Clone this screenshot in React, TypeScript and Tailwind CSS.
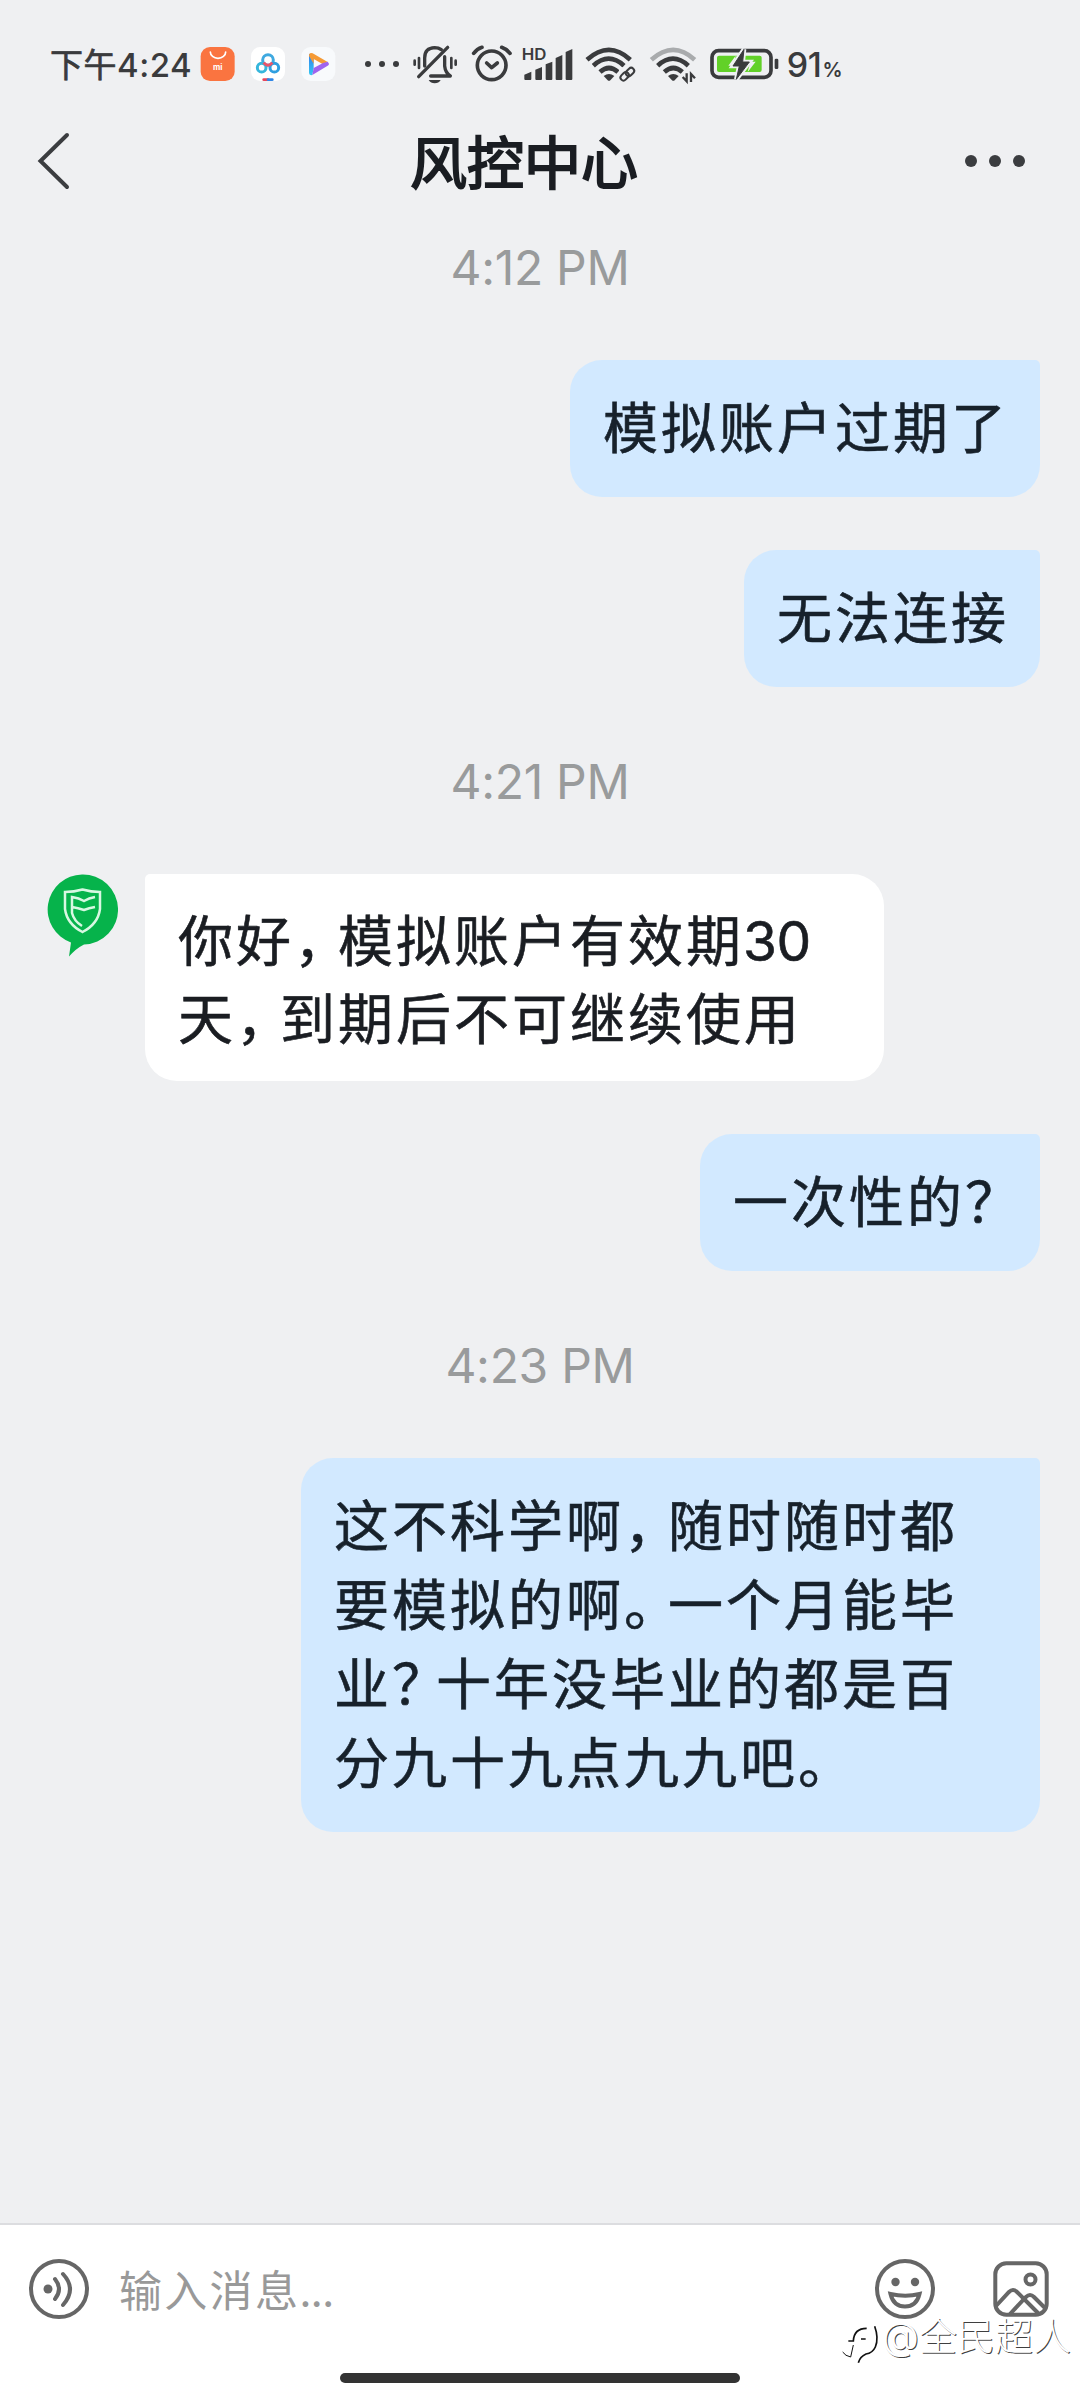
import type { ReactNode } from "react"

const BUBBLE_TEXT =
  "text-[55px] tracking-[3px] whitespace-nowrap [-webkit-text-stroke:0.6px_currentColor]"

/** Half-width punctuation with some air behind it, 44px in all */
function P({ children }: { children: ReactNode }) {
  return <span className="mr-[13.5px] [font-feature-settings:'halt']">{children}</span>
}

function TimeLabel({ children, className }: { children: string; className?: string }) {
  return (
    <div
      className={`h-[60px] text-center text-[48px] leading-[60px] tracking-[-0.300px] text-[#999b9c] ${className ?? ""}`}
    >
      {children}
    </div>
  )
}

function Sent({ lines, className }: { lines: ReactNode[]; className?: string }) {
  return (
    <div
      className={`self-end rounded-[32px] rounded-tr-[5px] bg-[#d2e9ff] pt-[29px] pb-[29px] pl-[33px] text-[#17212b] ${BUBBLE_TEXT} ${className ?? ""}`}
    >
      {lines.map((line, i) => (
        <div key={i} className="h-[79px] leading-[79px]">
          {line}
        </div>
      ))}
    </div>
  )
}

function StatusBar() {
  return (
    <div className="flex h-[70px] shrink-0 pl-[50px] text-[#3a3b3d]">
      <div className="flex w-[150px] items-center pt-[2px] whitespace-nowrap text-[33px] font-medium tracking-[0.5px]">
        <span className="font-normal [-webkit-text-stroke:0.7px_currentColor]">下午</span>4:24
      </div>

      {/* app notifications */}
      <svg viewBox="510 0 150 210" className="h-[70px] w-[50px]">
        <rect x="512" y="51" width="102" height="102" rx="28" fill="#fa7440" />
        <path d="M541 66a23 19 0 0 0 46 0" fill="none" stroke="#fff" strokeWidth="5" strokeLinecap="round" />
        <text x="563" y="120" textAnchor="middle" fontSize="24" fontWeight="700" fill="#fff">mi</text>
      </svg>
      <svg viewBox="660 0 150 210" className="h-[70px] w-[50px]">
        <rect x="663" y="51" width="102" height="102" rx="28" fill="#fff" />
        <g fill="none" strokeWidth="9">
          <circle cx="714" cy="90" r="16" stroke="#3fa9e0" />
          <circle cx="695" cy="113" r="13" stroke="#35b6dc" />
          <circle cx="733" cy="113" r="13" stroke="#2f9fe0" />
          <path d="M701 98q13 16 26 0" stroke="#e8566a" />
        </g>
        <path d="M701 149h13" stroke="#e8465a" strokeWidth="8" strokeLinecap="round" />
        <path d="M714 149h13" stroke="#2f86e6" strokeWidth="8" strokeLinecap="round" />
      </svg>
      <svg viewBox="810 0 300 210" className="h-[70px] w-[100px]">
        <defs>
          <linearGradient id="playLeft" x1="0" y1="0" x2="0" y2="1">
            <stop offset="0" stopColor="#2f7df0" />
            <stop offset="1" stopColor="#35c8f0" />
          </linearGradient>
        </defs>
        <rect x="814" y="51" width="102" height="102" rx="28" fill="#f8fafc" />
        <path d="M837 71l14 12v32l-4 20q-10 2-10-6z" fill="url(#playLeft)" />
        <path d="M837 78q0-12 11-8l45 26-14 7-28-16v14z" fill="#f59a35" />
        <path d="M897 101q0 4-4 6l-46 28 4-21 28-15 14-4z" fill="#a064ee" />
        <g fill="currentColor">
          <circle cx="1014" cy="102" r="9" />
          <circle cx="1056" cy="102" r="9" />
          <circle cx="1098" cy="102" r="9" />
        </g>
      </svg>

      {/* muted bell */}
      <svg viewBox="0 0 200 210" className="h-[70px] w-[66.67px]" fill="none" stroke="currentColor" strokeWidth="10" strokeLinecap="round">
        <path d="M74 108V84q0-30 30-31 12 0 20 6M134 80v28q2 20 17 30H92" strokeLinejoin="round" />
        <path d="M56 140l87-88" />
        <path d="M44 92v12M57 84v30M154 84v30M167 92v12" strokeWidth="8" />
        <path d="M86 150h36q-6 10-18 10t-18-10z" fill="currentColor" stroke="none" />
      </svg>
      {/* alarm */}
      <svg viewBox="200 0 150 210" className="h-[70px] w-[50px]" fill="none" stroke="currentColor" strokeWidth="11" strokeLinecap="round">
        <circle cx="274" cy="106" r="43" />
        <path d="M259 99l15 14 17-14" strokeLinejoin="round" />
        <path d="M220 70q10-13 25-18M304 52q16 6 25 18" />
      </svg>
      {/* HD signal */}
      <svg viewBox="350 0 190 210" className="h-[70px] w-[63.33px]" fill="currentColor">
        <text x="364" y="90" fontSize="46" fontWeight="600" textLength="74" lengthAdjust="spacingAndGlyphs">HD</text>
        <path d="M372 134l21-9v22q0 3-3 3h-15q-3 0-3-3zM405 119l20-8v36q0 3-3 3h-14q-3 0-3-3zM436 103l20-8v52q0 3-3 3h-14q-3 0-3-3zM466 84l20-9v72q0 3-3 3h-14q-3 0-3-3zM496 66l20-9v90q0 3-3 3h-14q-3 0-3-3z" />
      </svg>
      {/* wifi with link */}
      <svg viewBox="540 0 200 210" className="h-[70px] w-[66.67px]" fill="none" stroke="currentColor" strokeWidth="14">
        <path d="M561 89q66-59 130 0" />
        <path d="M580 107q46-42 92 0" />
        <path d="M600 126q27-24 54 0" />
        <path d="M611 138q16-12 32 0l-12 13q-4 3-8 0z" fill="currentColor" stroke="none" />
        <rect x="657" y="112" width="50" height="46" fill="#eff0f2" stroke="none" />
        <g strokeWidth="6" strokeLinecap="round">
          <rect x="660" y="130" width="28" height="18" rx="9" transform="rotate(-45 674 139)" />
          <rect x="676" y="117" width="28" height="18" rx="9" transform="rotate(-45 690 126)" />
        </g>
      </svg>
      {/* wifi with traffic arrows */}
      <svg viewBox="740 0 185 210" className="h-[70px] w-[61.67px]" fill="none" stroke="currentColor" strokeWidth="14">
        <path d="M753 89q66-59 130 0" stroke="#a9abad" />
        <path d="M772 107q46-42 92 0" />
        <path d="M792 126q27-24 54 0" />
        <path d="M803 138q16-12 32 0l-12 13q-4 3-8 0z" fill="currentColor" stroke="none" />
        <path d="M859 130v24l-12-13M872 156v-24l12 13" strokeWidth="7" />
      </svg>
      {/* charging battery */}
      <svg viewBox="925 0 235 210" className="h-[70px] w-[78.33px]">
        <rect x="937" y="62" width="177" height="80" rx="20" fill="none" stroke="currentColor" strokeWidth="11" />
        <rect x="952" y="77" width="134" height="49" rx="6" fill="#62d128" />
        <rect x="1125" y="86" width="11" height="31" rx="4" fill="currentColor" />
        <path d="M1033 58l-33 50h19l-9 40 39-52h-20z" fill="#eff0f2" stroke="#eff0f2" strokeWidth="14" />
        <path d="M1008 77l-22 30h16zM1044 126l24-31h-16z" fill="#eff0f2" />
        <path d="M1033 58l-33 50h19l-9 40 39-52h-20z" fill="currentColor" stroke="currentColor" strokeWidth="3" />
      </svg>
      <div className="flex items-baseline text-[34px] leading-[70px] font-medium tracking-[-0.300px]">
        91<span className="ml-px text-[20px] font-semibold">%</span>
      </div>
    </div>
  )
}

function Header() {
  return (
    <div className="flex h-[122px] shrink-0 items-center justify-between pr-[55px] pl-[36px]">
      <svg viewBox="0 0 36 60" className="h-[60px] w-[36px]" fill="none" stroke="#3b3d40" strokeWidth="4" strokeLinecap="round">
        <path d="M31 4L4.500 30l26.500 26" />
      </svg>
      <h1 className="pt-[5px] pl-[11px] text-[57px] leading-[80px] font-normal text-[#1a1d22] [-webkit-text-stroke:2px_currentColor]">
        风控中心
      </h1>
      <div className="flex gap-3">
        <span className="size-[12px] rounded-full bg-[#3b3d40]" />
        <span className="size-[12px] rounded-full bg-[#3b3d40]" />
        <span className="size-[12px] rounded-full bg-[#3b3d40]" />
      </div>
    </div>
  )
}

function Avatar() {
  return (
    <svg viewBox="0 0 72 84" className="h-[84px] w-[72px] shrink-0">
      <path d="M36 .5a35 35 0 1 1 2 70q-8 4-15 12l2-14A35 35 0 0 1 36 .5z" fill="#06b34b" />
      <g fill="none" stroke="#d8f8e2" strokeWidth="2.500">
        <path d="M19 18q9 0 17.500-2.500Q45 18 54 18v17q-2 15-17.500 23Q21 50 19 35z" />
        <path d="M49 23q-6 1-11 4-5-3-12-4v16q2 8 10 13M26 33q6 1 12 3 5-2 11-3" />
      </g>
    </svg>
  )
}

function Composer() {
  return (
    <div className="relative flex h-[177px] shrink-0 flex-col border-t-2 border-[#dcdde0] bg-white">
      <div className="flex h-[128px] items-center pr-[30px] pl-[28px]">
        <svg viewBox="0 0 62 62" className="size-[62px]" fill="none" stroke="#666" strokeWidth="4" strokeLinecap="round">
          <circle cx="31" cy="31" r="28" />
          <circle cx="20" cy="31" r="4.500" fill="#666" stroke="none" />
          <path d="M27 21q8 10 0 20M35 16q14 15 0 31" />
        </svg>
        <div className="ml-[29px] flex-1 pt-[4px] text-[43px] tracking-[2.300px] text-[#999]">
          输入消息<span className="-ml-px tracking-[-1px]">...</span>
        </div>
        <svg viewBox="0 0 62 62" className="size-[62px]" fill="none" stroke="#666" strokeWidth="4">
          <circle cx="31" cy="31" r="28" />
          <circle cx="21.500" cy="24" r="4.200" fill="#666" stroke="none" />
          <circle cx="41" cy="24" r="4.200" fill="#666" stroke="none" />
          <path d="M16.500 36q15 3.500 29 0-3 12.500-14.500 12.500T16.500 36z" />
        </svg>
        <svg viewBox="0 0 58 58" className="ml-[56px] size-[58px]" fill="none" stroke="#666" strokeWidth="4">
          <rect x="3.300" y="3.300" width="51.400" height="51.400" rx="11" />
          <circle cx="38.500" cy="19.500" r="5" />
          <path d="M4 46l13-14q4-4 8 0l22 22" />
          <path d="M18 54l16-17q4-4 8 0l12 12" />
        </svg>
      </div>
      <div className="mx-auto mt-[20px] h-[10px] w-[400px] rounded-full bg-[#333]" />

      {/* source stamp over the bar */}
      <div className="absolute top-[81px] right-[9px] flex items-start text-white">
        <svg viewBox="30 40 120 126" className="mt-[17px] mr-[2px] h-[42px] w-[40px]" fill="none" stroke="#111" strokeWidth="5">
          <path d="M38 127q8 12 24 15l8-36" strokeWidth="3" />
          <path d="M55 94h15q2-38 40-38M93 88h14" />
          <path d="M134 50q13 36 2 62-8 18-28 21-18 8-23 26" />
        </svg>
        <span className="text-[38px] leading-[60px] font-light [text-shadow:1px_1px_0_rgba(0,0,0,0.75)]">
          @全民超人
        </span>
      </div>
    </div>
  )
}

export default function App() {
  return (
    <div className="flex h-[2400px] w-[1080px] flex-col overflow-hidden bg-[#eff0f2] pt-[30px] font-[Inter,'Noto_Sans_CJK_SC',sans-serif]">
      <StatusBar />
      <Header />

      <div className="flex flex-1 flex-col pr-[40px]">
        <TimeLabel className="mt-[16px] ml-[40px]">4:12 PM</TimeLabel>
        <Sent className="mt-[62px] w-[470px]" lines={["模拟账户过期了"]} />
        <Sent className="mt-[53px] w-[296px]" lines={["无法连接"]} />

        <TimeLabel className="mt-[65px] ml-[40px]">4:21 PM</TimeLabel>
        <div className="mt-[62px] flex pl-[46px]">
          <Avatar />
          <div
            className={`ml-[27px] h-[207px] w-[739px] rounded-[32px] rounded-tl-[5px] bg-white pt-[28px] pl-[33px] text-[#1a1d22] ${BUBBLE_TEXT}`}
          >
            <div className="leading-[78px]">
              你好<P>，</P>模拟账户有效期<span className="-ml-px tracking-[-0.500px]">30</span>
            </div>
            <div className="leading-[78px]">
              天<P>，</P>到期后不可继续使用
            </div>
          </div>
        </div>
        <Sent
          className="mt-[53px] w-[340px]"
          lines={[<>一次性的<P>？</P></>]}
        />

        <TimeLabel className="mt-[65px] ml-[40px]">4:23 PM</TimeLabel>
        <Sent
          className="mt-[62px] w-[739px]"
          lines={[
            <>这不科学啊<P>，</P>随时随时都</>,
            <>要模拟的啊<P>。</P>一个月能毕</>,
            <>业<P>？</P>十年没毕业的都是百</>,
            <>分九十九点九九吧<P>。</P></>,
          ]}
        />
      </div>

      <Composer />
    </div>
  )
}
